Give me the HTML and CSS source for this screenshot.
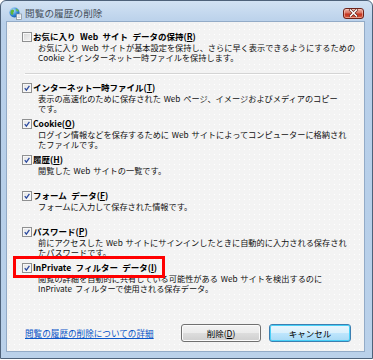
FILE: index.html
```html
<!DOCTYPE html>
<html lang="ja">
<head>
<meta charset="utf-8">
<title>閲覧の履歴の削除</title>
<link rel="stylesheet" href="styles.css">
</head>
<body>
<div class="window">
  <div class="titlebar">
    <svg class="appicon" width="13" height="13" viewBox="0 0 13 13">
      <defs>
        <radialGradient id="g" cx="0.35" cy="0.3" r="0.8">
          <stop offset="0" stop-color="#bfe6ff"/>
          <stop offset="0.6" stop-color="#2f86d6"/>
          <stop offset="1" stop-color="#134f9c"/>
        </radialGradient>
      </defs>
      <circle cx="5.5" cy="5.5" r="5" fill="url(#g)"/>
      <path d="M2 3.5 C3 2 4.5 2.2 5 3.4 C5.5 4.6 4 5 4.3 6.3 C4.6 7.6 3.2 8.4 2.3 7.4 C1.2 6.2 1.3 4.6 2 3.5 Z" fill="#5fb53a"/>
      <path d="M6.8 1.6 C8.3 2 9.4 3 9.8 4.4 C8.8 4.6 7.6 4 7 3.2 Z" fill="#6cc043"/>
      <rect x="7.5" y="7" width="5" height="5.5" fill="#fff" stroke="#7a8794" stroke-width="0.7"/>
      <path d="M8.5 9 H11.5 M8.5 10.6 H11.5" stroke="#9aa6b3" stroke-width="0.6"/>
    </svg>
    <span class="title">閲覧の履歴の削除</span>
    <div class="close">
      <svg width="11" height="8" viewBox="0 0 11 8">
        <path d="M2.5 1 L8.5 7 M8.5 1 L2.5 7" stroke="#5a1b14" stroke-width="2.6" stroke-linecap="square"/>
        <path d="M2.5 1 L8.5 7 M8.5 1 L2.5 7" stroke="#ffffff" stroke-width="1.5" stroke-linecap="square"/>
      </svg>
    </div>
  </div>

  <div class="client">
    <div class="item first">
      <div class="row">
        <span class="cb"></span>
        <span class="label">お気に入り Web サイト データの保持(<u>R</u>)</span>
      </div>
      <div class="desc">お気に入り Web サイトが基本設定を保持し、さらに早く表示できるようにするための<br>Cookie とインターネット一時ファイルを保持します。</div>
    </div>

    <div class="sep"></div>

    <div class="item">
      <div class="row">
        <span class="cb checked"><svg viewBox="0 0 10 10"><path d="M2.2 5.2 L4.2 7.6 L8 2.2"/></svg></span>
        <span class="label">インターネット一時ファイル(<u>T</u>)</span>
      </div>
      <div class="desc">表示の高速化のために保存された Web ページ、イメージおよびメディアのコピー<br>です。</div>
    </div>

    <div class="item">
      <div class="row">
        <span class="cb checked"><svg viewBox="0 0 10 10"><path d="M2.2 5.2 L4.2 7.6 L8 2.2"/></svg></span>
        <span class="label">Cookie(<u>O</u>)</span>
      </div>
      <div class="desc">ログイン情報などを保存するために Web サイトによってコンピューターに格納され<br>たファイルです。</div>
    </div>

    <div class="item">
      <div class="row">
        <span class="cb checked"><svg viewBox="0 0 10 10"><path d="M2.2 5.2 L4.2 7.6 L8 2.2"/></svg></span>
        <span class="label">履歴(<u>H</u>)</span>
      </div>
      <div class="desc">閲覧した Web サイトの一覧です。</div>
    </div>

    <div class="item">
      <div class="row">
        <span class="cb checked"><svg viewBox="0 0 10 10"><path d="M2.2 5.2 L4.2 7.6 L8 2.2"/></svg></span>
        <span class="label">フォーム データ(<u>F</u>)</span>
      </div>
      <div class="desc">フォームに入力して保存された情報です。</div>
    </div>

    <div class="item">
      <div class="row">
        <span class="cb checked"><svg viewBox="0 0 10 10"><path d="M2.2 5.2 L4.2 7.6 L8 2.2"/></svg></span>
        <span class="label">パスワード(<u>P</u>)</span>
      </div>
      <div class="desc">前にアクセスした Web サイトにサインインしたときに自動的に入力される保存され<br>たパスワードです。</div>
    </div>

    <div class="item">
      <div class="row marked">
        <span class="cb checked"><svg viewBox="0 0 10 10"><path d="M2.2 5.2 L4.2 7.6 L8 2.2"/></svg></span>
        <span class="label">InPrivate フィルター データ(<u>I</u>)</span>
        <span class="redbox"></span>
      </div>
      <div class="desc">閲覧の詳細を自動的に共有している可能性がある Web サイトを検出するのに<br>InPrivate フィルターで使用される保存データ。</div>
    </div>

    <div class="footer">
      <a class="link" href="#">閲覧の履歴の削除についての詳細</a>
      <div class="buttons">
        <button class="btn">削除(<u>D</u>)</button>
        <button class="btn default">キャンセル</button>
      </div>
    </div>
  </div>
</div>
</body>
</html>
```

FILE: styles.css
```css
* { box-sizing: border-box; }
html, body { margin: 0; padding: 0; }
body {
  width: 373px;
  height: 360px;
  overflow: hidden;
  background: #ffffff;
  font-family: "Noto Sans CJK JP", "Noto Sans", sans-serif;
  color: #000;
}
.window {
  width: 373px;
  height: 359px;
  border: 1px solid #4e627a;
  border-radius: 6px 6px 0 0;
  background: linear-gradient(#d2e2f3, #b9d0ea 22px, #b7cfe9 200px, #bad1ea);
  display: flex;
  flex-direction: column;
  padding: 0 7px 6px 5px;
}
.titlebar {
  height: 20px;
  display: flex;
  align-items: center;
  padding: 4px 1px 0 3px;
}
.appicon { display: block; flex: none; }
.title {
  margin-left: 3px;
  font-size: 9.6px;
  line-height: 12px;
  color: #47515d;
  letter-spacing: 0.1px;
}
.close {
  margin-left: auto;
  width: 21px;
  height: 11px;
  border: 1px solid #6e2219;
  border-radius: 3px;
  background: linear-gradient(#efb4a8, #d7705e 45%, #c3321f 55%, #d65a3d);
  display: flex;
  align-items: center;
  justify-content: center;
  box-shadow: inset 0 0 0 1px rgba(255,220,210,0.5);
}
.close svg { display: block; }

.client {
  flex: 1;
  border: 1px solid #93abc7;
  background-color: #f3f3f3;
  background-image: radial-gradient(circle, #ffffff 0.6px, transparent 0.9px);
  background-size: 5px 5px;
  display: flex;
  flex-direction: column;
  padding: 9px 13px 9px 15px;
}

.item { height: 36px; }
.item.first { height: auto; }
.row {
  display: flex;
  align-items: center;
  height: 11px;
  position: relative;
}
.cb {
  flex: none;
  width: 10px;
  height: 10px;
  border: 1px solid #8f9091;
  background: linear-gradient(135deg, #d6d6d6, #f4f4f4);
  box-shadow: inset 0 0 0 1px #f7f7f7;
  margin-right: 1px;
  display: flex;
  align-items: center;
  justify-content: center;
}
.cb.checked {
  background: linear-gradient(135deg, #e4e4e4, #fbfbfb);
}
.cb svg { width: 8px; height: 8px; display: block; }
.cb svg path {
  fill: none;
  stroke: #2b4a9f;
  stroke-width: 1.6;
}
.label {
  font-size: 8.5px;
  font-weight: bold;
  line-height: 11px;
  white-space: nowrap;
  word-spacing: 2.5px;
}
.desc {
  padding-left: 16px;
  font-size: 8.2px;
  line-height: 10px;
  white-space: nowrap;
  color: #111;
  word-spacing: 1px;
}
.sep {
  margin: 11px 1px 7px 3px;
  border-top: 1px solid #d4d4d4;
  border-bottom: 1px solid #ffffff;
}
.redbox {
  position: absolute;
  left: -9px;
  top: -6px;
  width: 152px;
  height: 22px;
  border: 3px solid #ff0000;
}

.footer {
  margin-top: auto;
  display: flex;
  align-items: center;
  height: 18px;
}
.link {
  margin-left: 3px;
  font-size: 8.6px;
  line-height: 11px;
  color: #0a56c8;
  text-decoration: underline;
  white-space: nowrap;
}
.buttons {
  margin-left: auto;
  display: flex;
  gap: 8px;
}
.btn {
  width: 80px;
  height: 18px;
  padding: 0;
  border: 1px solid #707070;
  border-radius: 3px;
  background: linear-gradient(#f2f2f2, #ebebeb 50%, #dddddd 51%, #cfcfcf);
  box-shadow: inset 0 0 0 1px #fbfbfb;
  font-family: "Noto Sans CJK JP", "Noto Sans", sans-serif;
  font-size: 8.5px;
  line-height: 16px;
  color: #000;
}
.btn.default {
  width: 82px;
  border-color: #3c7fb1;
  background: linear-gradient(#eaf6fd, #d9f0fc 50%, #bee6fd 51%, #a7d9f5);
  box-shadow: inset 0 0 0 1px #48d0f7;
}
```
